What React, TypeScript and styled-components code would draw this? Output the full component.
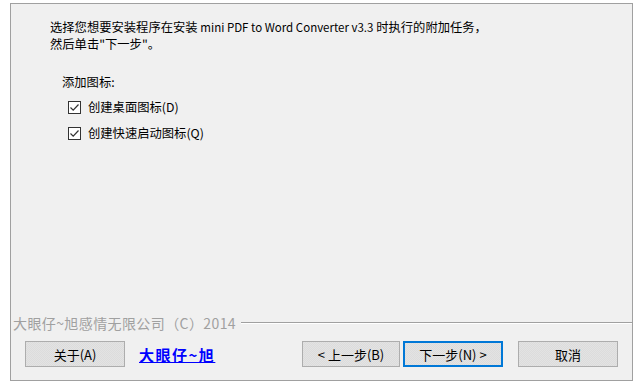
import React from "react";
import styled, { createGlobalStyle } from "styled-components";

const COLORS = {
  page: "#ffffff",
  panel: "#f0f0f0",
  edge: "#a0a0a0",
  text: "#000000",
  muted: "#a0a0a0",
  link: "#0000ff",
  focus: "#0078d7",
};

const GlobalStyle = createGlobalStyle`
  html, body {
    margin: 0;
    background: ${COLORS.page};
  }
  body {
    font-family: "Noto Sans CJK SC", "Noto Sans", sans-serif;
    color: ${COLORS.text};
  }
`;

const Page = styled.div`
  padding: 3px 0 0 10px;
`;

const Panel = styled.div`
  box-sizing: border-box;
  width: 623px;
  height: 378px;
  border: 1px solid ${COLORS.edge};
  background: ${COLORS.panel};
  display: flex;
  flex-direction: column;
`;

const Content = styled.div`
  flex: 1;
  padding: 15px 0 0 39px;
  font-size: 12.3px;
  line-height: 17px;
`;

const Intro = styled.p`
  margin: 0;
  white-space: nowrap;
`;

const Latin = styled.span`
  font-size: 11.5px;
`;

const Heading = styled.div`
  margin: 21px 0 3px 12px;
`;

const CheckRow = styled.label`
  display: flex;
  align-items: center;
  gap: 7px;
  height: 26px;
  margin-left: 18px;
`;

const Box = styled.span`
  box-sizing: border-box;
  width: 13px;
  height: 13px;
  border: 1px solid #333333;
  background: #ffffff;
  display: flex;
  align-items: center;
  justify-content: center;
`;

const Footer = styled.div`
  display: flex;
  flex-direction: column;
  padding-bottom: 13px;
`;

const Legend = styled.div`
  display: flex;
  align-items: center;
  gap: 5px;
  height: 16px;
  padding-left: 2px;
  font-size: 14px;
  letter-spacing: 0.4px;
  color: ${COLORS.muted};
  white-space: nowrap;
`;

const Rule = styled.span`
  flex: 1;
  height: 0;
  border-top: 1px solid ${COLORS.edge};
  border-bottom: 1px solid #ffffff;
`;

const ButtonRow = styled.div`
  display: flex;
  align-items: center;
  margin-top: 10px;
  padding: 0 14px;
`;

const Button = styled.button<{ $primary?: boolean; $gap?: number }>`
  box-sizing: border-box;
  width: ${(p) => (p.$primary ? 100 : 98)}px;
  height: 26px;
  margin-left: ${(p) => p.$gap ?? 0}px;
  padding: 0;
  font-family: inherit;
  font-size: 13px;
  color: ${COLORS.text};
  border: ${(p) => (p.$primary ? `2px solid ${COLORS.focus}` : "1px solid #adadad")};
  background: repeating-conic-gradient(#e3e3e3 0 25%, #dcdcdc 0 50%) 0 0 / 2px 2px;
  display: flex;
  align-items: center;
  justify-content: center;
`;

const WideButton = styled(Button)`
  width: 100px;
`;

const Link = styled.a`
  margin-left: 14px;
  font-size: 15px;
  letter-spacing: 1.5px;
  font-weight: bold;
  color: ${COLORS.link};
  text-decoration: underline;
`;

const Spacer = styled.span`
  flex: 1;
`;

function Check() {
  return (
    <Box>
      <svg width="11" height="11" viewBox="0 0 11 11">
        <path d="M1.5 5.5 L4.2 8.2 L9.5 2.5" fill="none" stroke="#333" strokeWidth="1.2" />
      </svg>
    </Box>
  );
}

export default function App() {
  return (
    <React.Fragment>
      <GlobalStyle />
      <Page>
        <Panel>
          <Content>
            <Intro>
              选择您想要安装程序在安装 <Latin>mini PDF to Word Converter v3.3</Latin> 时执行的附加任务，
            </Intro>
            <Intro>然后单击"下一步"。</Intro>
            <Heading>添加图标:</Heading>
            <CheckRow>
              <Check />
              创建桌面图标(D)
            </CheckRow>
            <CheckRow>
              <Check />
              创建快速启动图标(Q)
            </CheckRow>
          </Content>
          <Footer>
            <Legend>
              大眼仔~旭感情无限公司（C）2014
              <Rule />
            </Legend>
            <ButtonRow>
              <WideButton>关于(A)</WideButton>
              <Link>大眼仔~旭</Link>
              <Spacer />
              <Button>&lt; 上一步(B)</Button>
              <Button $primary $gap={3}>下一步(N) &gt;</Button>
              <WideButton $gap={15}>取消</WideButton>
            </ButtonRow>
          </Footer>
        </Panel>
      </Page>
    </React.Fragment>
  );
}
